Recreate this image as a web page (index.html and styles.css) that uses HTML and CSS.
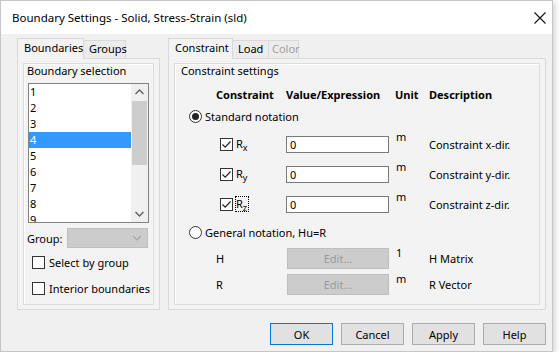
FILE: index.html
```html
<!DOCTYPE html>
<html lang="en">
<head>
  <meta charset="UTF-8">
  <title>Boundary Settings</title>
  <link rel="stylesheet" href="styles.css">
</head>
<body>

  <div class="window">
    <div class="titlebar">
      <span class="title">Boundary Settings - Solid, Stress-Strain (sld)</span>
      <svg class="close" width="14" height="14" viewBox="0 0 14 14"><path d="M1.5 1.5 L12.5 12.5 M12.5 1.5 L1.5 12.5" stroke="#111" stroke-width="1.1" fill="none"/></svg>
    </div>

    <div class="client">
      <div class="panes">

        <div class="tabwidget left">
          <div class="tabs">
            <div class="tab active w-bnd">Boundaries</div>
            <div class="tab w-grp">Groups</div>
          </div>
          <div class="page">
            <div class="groupbox">
              <div class="gb-title">Boundary selection</div>
              <div class="listbox">
                <div class="items">
                  <div class="item">1</div>
                  <div class="item">2</div>
                  <div class="item">3</div>
                  <div class="item selected">4</div>
                  <div class="item">5</div>
                  <div class="item">6</div>
                  <div class="item">7</div>
                  <div class="item">8</div>
                  <div class="item">9</div>
                </div>
                <div class="scrollbar">
                  <div class="arrow"><svg width="17" height="17" viewBox="0 0 17 17"><path d="M4.5 10 L8.5 6 L12.5 10" stroke="#606060" stroke-width="1.4" fill="none"/></svg></div>
                  <div class="thumb"></div>
                  <div class="track"></div>
                  <div class="arrow"><svg width="17" height="17" viewBox="0 0 17 17"><path d="M4.5 7 L8.5 11 L12.5 7" stroke="#606060" stroke-width="1.4" fill="none"/></svg></div>
                </div>
              </div>
              <div class="group-row">
                <span class="group-label">Group:</span>
                <div class="combo"><svg width="12" height="8" viewBox="0 0 12 8"><path d="M2 2 L6 6 L10 2" stroke="#a8a8a8" stroke-width="1.2" fill="none"/></svg></div>
              </div>
              <div class="check-row first"><span class="checkbox"></span><span>Select by group</span></div>
              <div class="check-row"><span class="checkbox"></span><span>Interior boundaries</span></div>
            </div>
          </div>
        </div>

        <div class="tabwidget right">
          <div class="tabs">
            <div class="tab active w-con">Constraint</div>
            <div class="tab w-load">Load</div>
            <div class="tab disabled w-col">Color</div>
          </div>
          <div class="page">
            <div class="groupbox">
              <div class="gb-title wide">Constraint settings</div>

              <div class="crow head">
                <span></span>
                <span>Constraint</span>
                <span>Value/Expression</span>
                <span>Unit</span>
                <span>Description</span>
              </div>

              <div class="radio-row"><span class="radio checked"></span><span>Standard notation</span></div>

              <div class="crow field">
                <span></span>
                <span class="cbox"><span class="checkbox on"><svg width="11" height="11" viewBox="0 0 11 11"><path d="M1.5 5.5 L4.2 8.2 L9.5 2.5" stroke="#222" stroke-width="1.2" fill="none"/></svg></span><span class="rlabel">R<sub>x</sub></span></span>
                <span><span class="input">0</span></span>
                <span class="unit">m</span>
                <span>Constraint x-dir.</span>
              </div>
              <div class="crow field">
                <span></span>
                <span class="cbox"><span class="checkbox on"><svg width="11" height="11" viewBox="0 0 11 11"><path d="M1.5 5.5 L4.2 8.2 L9.5 2.5" stroke="#222" stroke-width="1.2" fill="none"/></svg></span><span class="rlabel">R<sub>y</sub></span></span>
                <span><span class="input">0</span></span>
                <span class="unit">m</span>
                <span>Constraint y-dir.</span>
              </div>
              <div class="crow field">
                <span></span>
                <span class="cbox"><span class="checkbox on"><svg width="11" height="11" viewBox="0 0 11 11"><path d="M1.5 5.5 L4.2 8.2 L9.5 2.5" stroke="#222" stroke-width="1.2" fill="none"/></svg></span><span class="rlabel focus">R<sub>z</sub></span></span>
                <span><span class="input">0</span></span>
                <span class="unit">m</span>
                <span>Constraint z-dir.</span>
              </div>

              <div class="radio-row general"><span class="radio"></span><span>General notation, Hu=R</span></div>

              <div class="crow matrix">
                <span></span>
                <span>H</span>
                <span><span class="edit">Edit...</span></span>
                <span class="unit">1</span>
                <span>H Matrix</span>
              </div>
              <div class="crow matrix second">
                <span></span>
                <span>R</span>
                <span><span class="edit">Edit...</span></span>
                <span class="unit">m</span>
                <span>R Vector</span>
              </div>
            </div>
          </div>
        </div>

      </div>

      <div class="buttons">
        <button class="default">OK</button>
        <button>Cancel</button>
        <button>Apply</button>
        <button>Help</button>
      </div>
    </div>
  </div>

</body>
</html>
```

FILE: styles.css
```css
* {
  box-sizing: border-box;
}
body {
  margin: 0;
  background: #ffffff;
  font-family: "Noto Sans", "Segoe UI", sans-serif;
  font-size: 11px;
  color: #000;
}
.window {
  width: 553px;
  height: 352px;
  border: 1px solid #c6c6c6;
  background: #f0f0f0;
  box-shadow: 2px 2px 6px rgba(0,0,0,0.18);
  display: flex;
  flex-direction: column;
}
.titlebar {
  height: 33px;
  flex: none;
  background: #fff;
  display: flex;
  align-items: center;
  justify-content: space-between;
  padding: 0 5px 0 11px;
}
.title {
  font-size: 11.5px;
}
.client {
  padding: 4px 6px 0 16px;
}
.panes {
  display: flex;
  gap: 8px;
  height: 272px;
}
.tabwidget {
  display: flex;
  flex-direction: column;
}
.tabwidget.left {
  width: 143px;
}
.tabwidget.right {
  width: 378px;
}
.tabs {
  display: flex;
  align-items: flex-end;
  height: 20px;
}
.tab {
  height: 18px;
  line-height: 16px;
  padding-left: 5px;
  border: 1px solid #d9d9d9;
  border-bottom: none;
  background: #ececec;
  margin-right: -1px;
  white-space: nowrap;
}
.tab.active {
  height: 21px;
  line-height: 18px;
  margin-bottom: -1px;
  background: #f3f3f3;
  position: relative;
  z-index: 1;
}
.tab.disabled {
  color: #a0a0a0;
}
.w-bnd { width: 67px; padding-left: 6px; }
.w-grp { width: 43px; }
.w-con { width: 65px; padding-left: 6px; }
.w-load { width: 37px; }
.w-col { width: 31px; padding-left: 3px; }

.page {
  flex: 1;
  border: 1px solid #d9d9d9;
  background: #f3f3f3;
  padding: 4px 5px 4px 5px;
  display: flex;
}
.groupbox {
  flex: 1;
  border: 1px solid #dcdcdc;
  box-shadow: inset 1px 1px 0 #fff;
  display: flex;
  flex-direction: column;
}
.gb-title {
  line-height: 14px;
  padding-left: 3px;
}
.gb-title.wide {
  padding-left: 6px;
}

/* boundary list */
.listbox {
  margin: 5px 0 0 4px;
  width: 121px;
  height: 140px;
  border: 1px solid #828282;
  background: #fff;
  display: flex;
  overflow: hidden;
}
.items {
  flex: 1;
}
.item {
  height: 16px;
  line-height: 16px;
  padding-left: 1px;
}
.item.selected {
  background: #3399ff;
  color: #fff;
}
.scrollbar {
  width: 17px;
  background: #f0f0f0;
  display: flex;
  flex-direction: column;
}
.arrow {
  height: 17px;
  flex: none;
}
.arrow svg {
  display: block;
}
.thumb {
  height: 64px;
  margin: 0 1px;
  background: #cdcdcd;
}
.track {
  flex: 1;
}
.group-row {
  display: flex;
  align-items: center;
  margin-top: 5px;
  padding-left: 3px;
}
.group-label {
  width: 40px;
}
.combo {
  width: 81px;
  height: 20px;
  background: #cccccc;
  border: 1px solid #bfbfbf;
  display: flex;
  align-items: center;
  justify-content: flex-end;
  padding-right: 4px;
}
.check-row {
  display: flex;
  align-items: center;
  gap: 4px;
  height: 16px;
  margin-top: 10px;
  padding-left: 8px;
  white-space: nowrap;
}
.check-row.first {
  margin-top: 6px;
}
.checkbox {
  width: 13px;
  height: 13px;
  border: 1px solid #333;
  background: #fff;
  flex: none;
  display: flex;
  align-items: center;
  justify-content: center;
}
.checkbox svg {
  display: block;
}

/* constraint table */
.crow {
  display: grid;
  grid-template-columns: 41px 70px 109px 34px 1fr;
  align-items: center;
  white-space: nowrap;
}
.crow.head {
  font-weight: bold;
  height: 16px;
  line-height: 16px;
  margin-top: 9px;
}
.radio-row {
  display: flex;
  align-items: center;
  gap: 3px;
  height: 16px;
  margin-top: 5px;
  padding-left: 14px;
}
.radio-row.general {
  margin-top: 10px;
}
.radio {
  width: 13px;
  height: 13px;
  border: 1px solid #333;
  border-radius: 50%;
  background: #fff;
  display: flex;
  align-items: center;
  justify-content: center;
}
.radio.checked::after {
  content: "";
  width: 7px;
  height: 7px;
  border-radius: 50%;
  background: #222;
}
.crow.field {
  height: 20px;
  margin-top: 10px;
}
.cbox {
  display: flex;
  align-items: center;
  gap: 3px;
  padding-left: 4px;
}
.rlabel {
  line-height: 14px;
  padding-right: 1px;
}
.rlabel sub {
  font-size: 9px;
  vertical-align: -3px;
  line-height: 0;
}
.rlabel.focus {
  outline: 1px dotted #000;
}
.input {
  display: block;
  width: 103px;
  height: 17px;
  border: 1px solid #7a7a7a;
  background: #fff;
  line-height: 15px;
  padding-left: 3px;
}
.unit {
  align-self: start;
  line-height: 16px;
  margin-top: -5px;
  padding-left: 1px;
}
.crow.matrix {
  height: 21px;
  margin-top: 8px;
}
.crow.matrix.second {
  margin-top: 5px;
}
.crow.matrix .unit {
  margin-top: -3px;
}
.edit {
  display: block;
  margin-left: 1px;
  width: 102px;
  height: 21px;
  line-height: 19px;
  background: #cccccc;
  border: 1px solid #bfbfbf;
  color: #9a9a9a;
  text-align: center;
}

/* dialog buttons */
.buttons {
  display: flex;
  justify-content: flex-end;
  gap: 8px;
  margin-top: 13px;
}
button {
  width: 63px;
  height: 22px;
  font-family: inherit;
  font-size: 11px;
  background: #e1e1e1;
  border: 1px solid #adadad;
  padding: 0;
  color: #000;
}
button.default {
  border-color: #0078d7;
}
```
